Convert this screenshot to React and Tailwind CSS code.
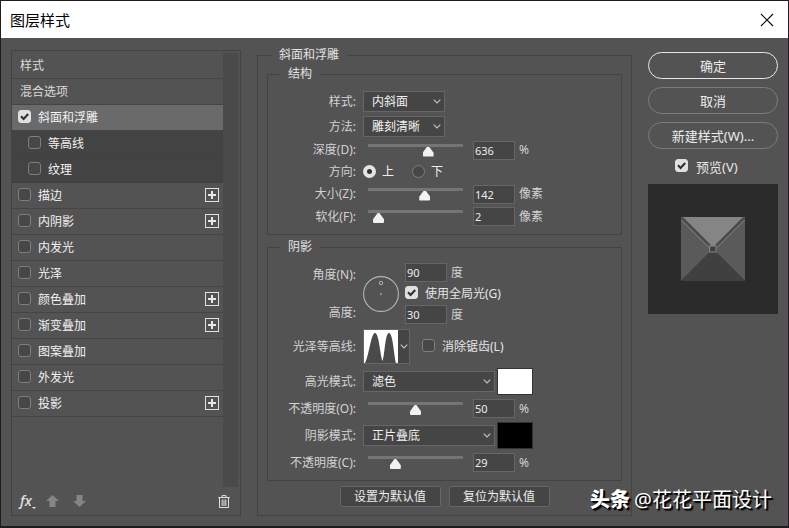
import React from "react";

const BLEND_STYLES = ["内斜面", "外斜面", "浮雕效果", "枕状浮雕"];
const TECHNIQUES = ["雕刻清晰", "平滑", "雕刻柔和"];
const BLEND_MODES = ["正常", "正片叠底", "滤色", "叠加"];

const EFFECTS = [
  { name: "斜面和浮雕", checked: true, selected: true },
  { name: "等高线", sub: true },
  { name: "纹理", sub: true },
  { name: "描边", multi: true },
  { name: "内阴影", multi: true },
  { name: "内发光" },
  { name: "光泽" },
  { name: "颜色叠加", multi: true },
  { name: "渐变叠加", multi: true },
  { name: "图案叠加" },
  { name: "外发光" },
  { name: "投影", multi: true },
];

function CheckBox({ id, checked }) {
  return (
    <span className="mb-0.5 grid size-[13px] shrink-0">
      <input
        id={id}
        type="checkbox"
        defaultChecked={checked}
        className="peer col-start-1 row-start-1 size-[13px] appearance-none rounded-[3px] border border-[#7e7e7e] bg-[#474747] checked:border-[#e0e0e0] checked:bg-[#e0e0e0]"
      />
      <svg
        viewBox="0 0 13 13"
        className="pointer-events-none invisible col-start-1 row-start-1 size-[13px] peer-checked:visible"
        aria-hidden="true"
      >
        <path d="M3 6.3 5.6 9 10.2 4" fill="none" stroke="#2e2e2e" strokeWidth="2" />
      </svg>
    </span>
  );
}

function Radio({ id, checked, className }) {
  return (
    <input
      id={id}
      type="radio"
      name="direction"
      defaultChecked={checked}
      className={
        "mb-0.5 size-[13px] shrink-0 appearance-none rounded-full border border-[#7e7e7e] bg-[#474747] checked:border-4 checked:border-[#e4e4e4] checked:bg-[#333333] " +
        (className || "")
      }
    />
  );
}

function Chevron() {
  return (
    <svg viewBox="0 0 8 5" className="h-[5px] w-2" aria-hidden="true">
      <path d="M.7.7 4 4 7.3.7" fill="none" stroke="#c4c4c4" strokeWidth="1.1" />
    </svg>
  );
}

function Select({ id, options, value, width }) {
  return (
    <span className={"relative flex items-center " + width}>
      <select
        id={id}
        defaultValue={value}
        className="h-[21px] w-full appearance-none border border-[#666666] bg-[#454545] pr-4 pl-2 text-xs leading-[18px] text-[#f0f0f0]"
      >
        {options.map((o) => (
          <option key={o}>{o}</option>
        ))}
      </select>
      <span className="pointer-events-none absolute right-1">
        <Chevron />
      </span>
    </span>
  );
}

function Slider({ label, position }) {
  return (
    <input
      type="range"
      aria-label={label}
      min="0"
      max="100"
      defaultValue={position}
      className="ml-[5px] h-[13px] w-[95px] appearance-none bg-[linear-gradient(#757575_3px,transparent_3px)] [&::-webkit-slider-runnable-track]:h-[13px] [&::-webkit-slider-runnable-track]:bg-transparent [&::-webkit-slider-thumb]:mt-[3px] [&::-webkit-slider-thumb]:h-[10px] [&::-webkit-slider-thumb]:w-[11px] [&::-webkit-slider-thumb]:appearance-none [&::-webkit-slider-thumb]:rounded-[1px] [&::-webkit-slider-thumb]:bg-[#f2f2f2] [&::-webkit-slider-thumb]:[clip-path:polygon(42%_0,58%_0,100%_62%,100%_100%,0_100%,0_62%)]"
    />
  );
}

function NumberBox({ id, value }) {
  return (
    <input
      id={id}
      type="text"
      defaultValue={value}
      className="h-[19px] w-[42px] border border-[#666666] bg-[#454545] px-px text-[11px] leading-4 text-[#ececec]"
    />
  );
}

function Label({ htmlFor, children }) {
  return (
    <label htmlFor={htmlFor} className="w-[89px] shrink-0 pr-px text-right text-[#d2d2d2]">
      {children}
    </label>
  );
}

function Row({ height, children }) {
  return <div className={"flex items-center gap-1.5 " + height}>{children}</div>;
}

function SliderRow({ id, label, position, value, unit, height }) {
  return (
    <Row height={height}>
      <Label htmlFor={id}>{label}</Label>
      <Slider label={label} position={position} />
      <span className="ml-1 flex items-center gap-1">
        <NumberBox id={id} value={value} />
        <span className="text-[#d2d2d2]">{unit}</span>
      </span>
    </Row>
  );
}

function Group({ title, className, children }) {
  return (
    <fieldset className={"min-w-0 border border-[#434343] " + className}>
      <legend className="ml-3 px-2 leading-4 text-[#e2e2e2]">{title}</legend>
      {children}
    </fieldset>
  );
}

function PlusButton({ name }) {
  return (
    <button type="button" aria-label={"添加" + name} className="mb-0.5 ml-auto">
      <svg viewBox="0 0 14 14" className="size-3.5">
        <rect x=".5" y=".5" width="13" height="13" fill="none" stroke="#e0e0e0" />
        <path d="M7 3v8M3 7h8" stroke="#e6e6e6" strokeWidth="2" />
      </svg>
    </button>
  );
}

function rowColour(effect) {
  if (effect.selected) return "bg-[#6a6a6a] pl-1.5 border-[#454545]";
  if (effect.sub) return "bg-[#434343] pl-4 border-[#404040]";
  return "pl-1.5 border-[#454545]";
}

function EffectList() {
  return (
    <section className="flex w-[230px] shrink-0 flex-col border border-[#434343] pt-0.5">
      <div className="flex flex-1 pr-0.5">
        <ul className="flex-1">
          <li className="flex h-[26px] items-center border-b border-[#454545] pl-2 text-[#dcdcdc]">样式</li>
          <li className="flex h-[26px] items-center border-b border-[#454545] pl-2 text-[#dcdcdc]">混合选项</li>
          {EFFECTS.map((e, i) => (
            <li
              key={e.name}
              className={"flex h-[26px] items-center gap-[7px] border-b pr-1 text-[#f2f2f2] " + rowColour(e)}
            >
              <CheckBox id={"effect-" + i} checked={e.checked} />
              <label htmlFor={"effect-" + i}>{e.name}</label>
              {e.multi && <PlusButton name={e.name} />}
            </li>
          ))}
        </ul>
        <div className="w-[15px] bg-[#4a4a4a]" />
      </div>
      <div className="flex h-7 items-center pr-2.5 pl-2">
        <button type="button" aria-label="效果" className="flex items-end text-[#dedede]">
          <span className="font-['Open_Sans'] text-sm leading-4 font-semibold italic">fx</span>
          <svg viewBox="0 0 4 2" className="h-0.5 w-1">
            <path d="M0 0h4L2 2z" fill="#e6e6e6" />
          </svg>
        </button>
        <button type="button" aria-label="上移" className="ml-2.5">
          <svg viewBox="0 0 13 12" className="h-3 w-[13px]">
            <path d="M6.5 0 13 6H9.5v6h-6V6H0z" fill="#858585" />
          </svg>
        </button>
        <button type="button" aria-label="下移" className="ml-3.5">
          <svg viewBox="0 0 13 12" className="h-3 w-[13px]">
            <path d="M6.5 12 13 6H9.5V0h-6v6H0z" fill="#858585" />
          </svg>
        </button>
        <button type="button" aria-label="删除" className="ml-auto">
          <svg viewBox="0 0 12 13" className="h-[13px] w-3" fill="none" stroke="#e0e0e0">
            <path d="M4 2V.6h4V2M.3 2.5h11.4M1.5 3v9.5h9V3M4.2 4.5v6.5M6 4.5v6.5M7.8 4.5v6.5" />
          </svg>
        </button>
      </div>
    </section>
  );
}

function AngleDial() {
  return (
    <svg viewBox="0 0 36 36" className="size-9 shrink-0" fill="none" role="img" aria-label="光照角度">
      <circle cx="18" cy="18" r="17.4" stroke="#b4b4b4" strokeWidth="1.1" />
      <circle cx="18" cy="7" r="1.7" stroke="#b4b4b4" />
      <circle cx="18" cy="18" r="1" fill="#a0a0a0" />
    </svg>
  );
}

function ContourPicker() {
  return (
    <button
      type="button"
      id="contour"
      className="flex h-[35px] w-[47px] items-center border border-[#666666] bg-[#454545]"
    >
      <svg viewBox="0 0 34 34" className="h-[33px] w-[34px]" preserveAspectRatio="none">
        <rect width="34" height="34" fill="#fff" />
        <path
          d="M1 34C5 27 7 3 11 3s5 22 7.500 29C21 25 21 3 25 3s5 24 7 31z"
          fill="#4a4a4a"
        />
      </svg>
      <span className="flex flex-1 justify-center">
        <Chevron />
      </span>
    </button>
  );
}

function Swatch({ colour, label }) {
  return (
    <button
      type="button"
      aria-label={label}
      className={"-ml-1 h-[27px] w-9 border border-[#333333] " + colour}
    />
  );
}

function Structure() {
  return (
    <Group title="结构" className="pt-[7px] pb-1.5">
      <Row height="h-[25px]">
        <Label htmlFor="style">样式:</Label>
        <Select id="style" options={BLEND_STYLES} value="内斜面" width="w-[82px]" />
      </Row>
      <Row height="h-[25px]">
        <Label htmlFor="technique">方法:</Label>
        <Select id="technique" options={TECHNIQUES} value="雕刻清晰" width="w-[82px]" />
      </Row>
      <SliderRow id="depth" label="深度(D):" position={65} value="636" unit="%" height="h-[22px]" />
      <Row height="h-[22px]">
        <span className="w-[89px] shrink-0 pr-px text-right text-[#d2d2d2]">方向:</span>
        <Radio id="dir-up" checked />
        <label htmlFor="dir-up" className="text-[#f0f0f0]">上</label>
        <Radio id="dir-down" className="ml-3" />
        <label htmlFor="dir-down" className="text-[#f0f0f0]">下</label>
      </Row>
      <SliderRow id="size" label="大小(Z):" position={61} value="142" unit="像素" height="h-[22px]" />
      <SliderRow id="soften" label="软化(F):" position={6} value="2" unit="像素" height="h-[23px]" />
    </Group>
  );
}

function Shading() {
  return (
    <Group title="阴影" className="mt-1 pt-2 pb-1">
      <div className="flex items-center gap-1.5">
        <div className="flex flex-col gap-[22px]">
          <Label htmlFor="angle">角度(N):</Label>
          <Label htmlFor="altitude">高度:</Label>
        </div>
        <AngleDial />
        <div className="flex flex-col">
          <div className="flex h-[19px] items-center gap-1 text-[#d2d2d2]">
            <NumberBox id="angle" value="90" />度
          </div>
          <div className="flex h-[23px] items-center gap-[7px] text-[#e6e6e6]">
            <CheckBox id="global" checked />
            <label htmlFor="global">使用全局光(G)</label>
          </div>
          <div className="flex h-[19px] items-center gap-1 text-[#d2d2d2]">
            <NumberBox id="altitude" value="30" />度
          </div>
        </div>
      </div>
      <div className="flex items-center gap-1.5 pt-[5px] pb-1">
        <Label htmlFor="contour">光泽等高线:</Label>
        <ContourPicker />
        <span className="ml-1.5 flex items-center gap-[7px] text-[#e6e6e6]">
          <CheckBox id="antialias" />
          <label htmlFor="antialias">消除锯齿(L)</label>
        </span>
      </div>
      <Row height="h-[27px]">
        <Label htmlFor="highlight">高光模式:</Label>
        <Select id="highlight" options={BLEND_MODES} value="滤色" width="w-[132px]" />
        <Swatch colour="bg-white" label="高光颜色" />
      </Row>
      <SliderRow id="hi-opacity" label="不透明度(O):" position={50} value="50" unit="%" height="h-[27px]" />
      <Row height="h-[27px]">
        <Label htmlFor="shadow">阴影模式:</Label>
        <Select id="shadow" options={BLEND_MODES} value="正片叠底" width="w-[132px]" />
        <Swatch colour="bg-black" label="阴影颜色" />
      </Row>
      <SliderRow id="sh-opacity" label="不透明度(C):" position={26} value="29" unit="%" height="h-[27px]" />
    </Group>
  );
}

function DefaultButton({ children }) {
  return (
    <button
      type="button"
      className="h-[21px] w-[101px] rounded-[2px] border border-[#666666] bg-[#454545] leading-[18px] text-[#ececec]"
    >
      {children}
    </button>
  );
}

function PillButton({ primary, children }) {
  return (
    <button
      type="button"
      className={
        "h-[27px] rounded-full border text-[13px] leading-5 text-[#ececec] " +
        (primary ? "border-[#e8e8e8]" : "border-[#7c7c7c]")
      }
    >
      {children}
    </button>
  );
}

function Preview() {
  return (
    <svg viewBox="0 0 130 130" className="w-full" role="img" aria-label="效果预览">
      <rect width="130" height="130" fill="#2b2b2b" />
      <path d="M33 33h64L65 65z" fill="#858585" />
      <path d="M33 33v64l32-32zM97 33v64L65 65z" fill="#5a5a5a" />
      <path d="M33 97h64L65 65z" fill="#404040" />
      <path d="M34 34 62 62M96 34 68 62" stroke="#4a4a4a" strokeWidth="2.6" />
      <path d="M33.5 36 61 63.5M96.5 36 69 63.5" stroke="#858585" strokeWidth="1" />
      <rect x="61.5" y="62" width="6.5" height="6" fill="#404040" stroke="#858585" />
    </svg>
  );
}

export default function App() {
  return (
    <div className="relative flex min-h-screen flex-col border border-b-2 border-[#1f1b1f] bg-[#535353] font-['Noto_Sans','Noto_Sans_CJK_SC',sans-serif] text-xs leading-4">
      <header className="flex h-[37px] items-center justify-between bg-white pr-3.5 pl-[9px] text-black">
        <h1 className="text-[15px] leading-5">图层样式</h1>
        <button type="button" aria-label="关闭">
          <svg viewBox="0 0 14 14" className="size-3.5">
            <path d="m1 1 12 12M13 1 1 13" stroke="#111" strokeWidth="1.2" />
          </svg>
        </button>
      </header>

      <main className="flex flex-1 gap-4 pt-3 pr-2.5 pb-2.5 pl-2.5">
        <EffectList />

        <fieldset className="-mt-[3px] min-w-0 flex-1 self-start border border-[#434343] px-[9px] pt-[3px] pb-2">
          <legend className="ml-1 px-2 leading-4 text-[#e2e2e2]">斜面和浮雕</legend>
          <Structure />
          <Shading />
          <div className="mt-[5px] flex justify-center gap-2">
            <DefaultButton>设置为默认值</DefaultButton>
            <DefaultButton>复位为默认值</DefaultButton>
          </div>
        </fieldset>

        <aside className="flex w-[130px] shrink-0 flex-col gap-2 pt-0.5">
          <PillButton primary>确定</PillButton>
          <PillButton>取消</PillButton>
          <PillButton>新建样式(W)...</PillButton>
          <div className="flex h-[19px] items-center gap-2 pl-[27px] text-[13px] text-[#e6e6e6]">
            <CheckBox id="preview" checked />
            <label htmlFor="preview">预览(V)</label>
          </div>
          <Preview />
        </aside>
      </main>

      <p className="absolute right-4 bottom-3 flex gap-1 text-xl leading-7 text-white [text-shadow:1px_1px_1px_#000,2px_2px_1px_#000]">
        <b className="font-black">头条</b>
        <span>@花花平面设计</span>
      </p>
    </div>
  );
}
